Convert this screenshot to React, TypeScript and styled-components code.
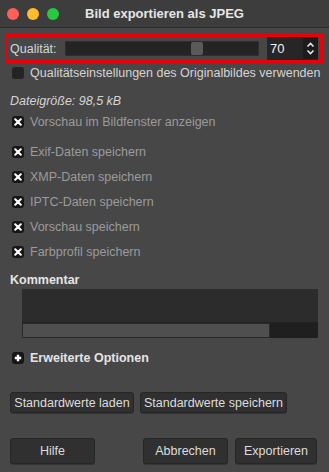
import React from "react";
import styled, { createGlobalStyle } from "styled-components";

const Global = createGlobalStyle`
  html, body { margin: 0; padding: 0; background: #474747; }
  body { font-family: "Liberation Sans", Arial, sans-serif; font-size: 12.5px; }
`;

const Window = styled.div`
  width: 329px;
  height: 472px;
  background: #474747;
  display: flex;
  flex-direction: column;
  overflow: hidden;
`;

const TitleBar = styled.div`
  height: 27px;
  background: #3d3d3d;
  border-bottom: 1px solid #2b2b2b;
  display: flex;
  align-items: center;
  position: relative;
  padding-left: 7px;
  gap: 8px;
`;

const Light = styled.span<{ $c: string }>`
  width: 12px;
  height: 12px;
  border-radius: 50%;
  background: ${(p) => p.$c};
`;

const Title = styled.div`
  position: absolute;
  inset: 0;
  display: flex;
  align-items: center;
  justify-content: center;
  color: #e6e6e6;
  font-weight: bold;
  font-size: 13px;
  pointer-events: none;
`;

const Body = styled.div`
  display: flex;
  flex-direction: column;
  padding: 6px 6px 0 5px;
`;

const Highlight = styled.div`
  border: 3px solid #e8000b;
  height: 23px;
  display: flex;
  align-items: center;
  padding: 0 2px;
`;

const Label = styled.span`
  color: #d6d6d6;
  width: 55px;
  flex: none;
`;

const Trough = styled.div`
  width: 192px;
  height: 13px;
  background: #242424;
  border: 1px solid #2e2e2e;
  border-radius: 1px;
  position: relative;
  flex: none;
`;

const Handle = styled.div`
  position: absolute;
  top: 0;
  width: 12px;
  height: 13px;
  background: #5a5a5a;
  border-radius: 2px;
`;

const Spin = styled.div`
  flex: 1;
  height: 23px;
  margin-left: 8px;
  background: #262626;
  display: flex;
  align-items: center;
`;

const SpinValue = styled.span`
  flex: 1;
  color: #f2f2f2;
  padding-left: 3px;
  font-size: 13px;
`;

const SpinArrows = styled.div`
  width: 15px;
  height: 21px;
  background: #1c1c1c;
  display: flex;
  align-items: center;
  justify-content: center;
`;

const Row = styled.div<{ $top: number; $h?: number; $indent?: number }>`
  margin-top: ${(p) => p.$top}px;
  height: ${(p) => p.$h ?? 20}px;
  display: flex;
  align-items: center;
  gap: 6px;
  padding-left: ${(p) => p.$indent ?? 7}px;
`;

const Box = styled.span<{ $empty?: boolean }>`
  width: 12px;
  height: 12px;
  border-radius: 3px;
  background: ${(p) => (p.$empty ? "#242424" : "#161616")};
  display: flex;
  align-items: center;
  justify-content: center;
  flex: none;
`;

const Text = styled.span<{ $dim?: boolean }>`
  color: ${(p) => (p.$dim ? "#9b9b9b" : "#d4d4d4")};
  white-space: nowrap;
`;

const Italic = styled.span`
  color: #d4d4d4;
  font-style: italic;
`;

const Heading = styled.span`
  color: #e4e4e4;
  font-weight: bold;
`;

const Comment = styled.div`
  margin: 0 5px 0 17px;
  height: 49px;
  background: #2c2c2c;
  display: flex;
  flex-direction: column;
  justify-content: flex-end;
`;

const HScroll = styled.div`
  height: 15px;
  background: #1f1f1f;
  border-top: 1px solid #222;
  display: flex;
`;

const HThumb = styled.div`
  width: 246px;
  background: #4f4f4f;
  border: 1px solid #2a2a2a;
  border-radius: 1px;
`;

const ButtonRow = styled.div<{ $top: number }>`
  display: flex;
  margin-top: ${(p) => p.$top}px;
  padding-left: 5px;
`;

const Button = styled.button<{ $w: number; $h: number; $ml?: number }>`
  width: ${(p) => p.$w}px;
  height: ${(p) => p.$h}px;
  margin-left: ${(p) => p.$ml ?? 0}px;
  background: #303030;
  border: 1px solid #262626;
  border-radius: 3px;
  color: #dcdcdc;
  font-family: "Liberation Sans", Arial, sans-serif;
  font-size: 12.5px;
  padding: 0;
  box-shadow: 0 1px 0 rgba(0, 0, 0, 0.25);
`;

const Cross = () => (
  <svg width="8" height="8" viewBox="0 0 8 8">
    <path d="M1.2 1.2 L6.8 6.8 M6.8 1.2 L1.2 6.8" stroke="#fff" strokeWidth="2" strokeLinecap="round" />
  </svg>
);

const Plus = () => (
  <svg width="8" height="8" viewBox="0 0 8 8">
    <path d="M4 0.8 V7.2 M0.8 4 H7.2" stroke="#fff" strokeWidth="2.4" />
  </svg>
);

const Arrows = () => (
  <svg width="9" height="15" viewBox="0 0 9 15">
    <path d="M1.5 5.5 L4.5 2.5 L7.5 5.5" fill="none" stroke="#e8e8e8" strokeWidth="1.6" />
    <path d="M1.5 9.5 L4.5 12.5 L7.5 9.5" fill="none" stroke="#e8e8e8" strokeWidth="1.6" />
  </svg>
);

const saveOptions = [
  "Exif-Daten speichern",
  "XMP-Daten speichern",
  "IPTC-Daten speichern",
  "Vorschau speichern",
  "Farbprofil speichern",
];

export default function App() {
  const quality = 70;
  return (
    <Window>
      <Global />
      <TitleBar>
        <Light $c="#fe5f57" />
        <Light $c="#febc2e" />
        <Light $c="#28c840" />
        <Title>Bild exportieren als JPEG</Title>
      </TitleBar>
      <Body>
        <Highlight>
          <Label>Qualität:</Label>
          <Trough>
            <Handle style={{ left: `${(quality / 100) * 180 - 1}px` }} />
          </Trough>
          <Spin>
            <SpinValue>{quality}</SpinValue>
            <SpinArrows>
              <Arrows />
            </SpinArrows>
          </Spin>
        </Highlight>
        <Row $top={0}>
          <Box $empty />
          <Text>Qualitätseinstellungen des Originalbildes verwenden</Text>
        </Row>
        <Row $top={8} $indent={5}>
          <Italic>Dateigröße: 98,5 kB</Italic>
        </Row>
        <Row $top={1}>
          <Box>
            <Cross />
          </Box>
          <Text $dim>Vorschau im Bildfenster anzeigen</Text>
        </Row>
        {saveOptions.map((o, i) => (
          <Row $top={i === 0 ? 10 : 5} key={o}>
            <Box>
              <Cross />
            </Box>
            <Text $dim>{o}</Text>
          </Row>
        ))}
        <Row $top={9} $h={18} $indent={5}>
          <Heading>Kommentar</Heading>
        </Row>
        <Comment>
          <HScroll>
            <HThumb />
          </HScroll>
        </Comment>
        <Row $top={10}>
          <Box>
            <Plus />
          </Box>
          <Heading>Erweiterte Optionen</Heading>
        </Row>
        <ButtonRow $top={24}>
          <Button $w={124} $h={21}>Standardwerte laden</Button>
          <Button $w={147} $h={21} $ml={6}>Standardwerte speichern</Button>
        </ButtonRow>
        <ButtonRow $top={25}>
          <Button $w={85} $h={26}>Hilfe</Button>
          <Button $w={85} $h={26} $ml={48}>Abbrechen</Button>
          <Button $w={82} $h={26} $ml={7}>Exportieren</Button>
        </ButtonRow>
      </Body>
    </Window>
  );
}
